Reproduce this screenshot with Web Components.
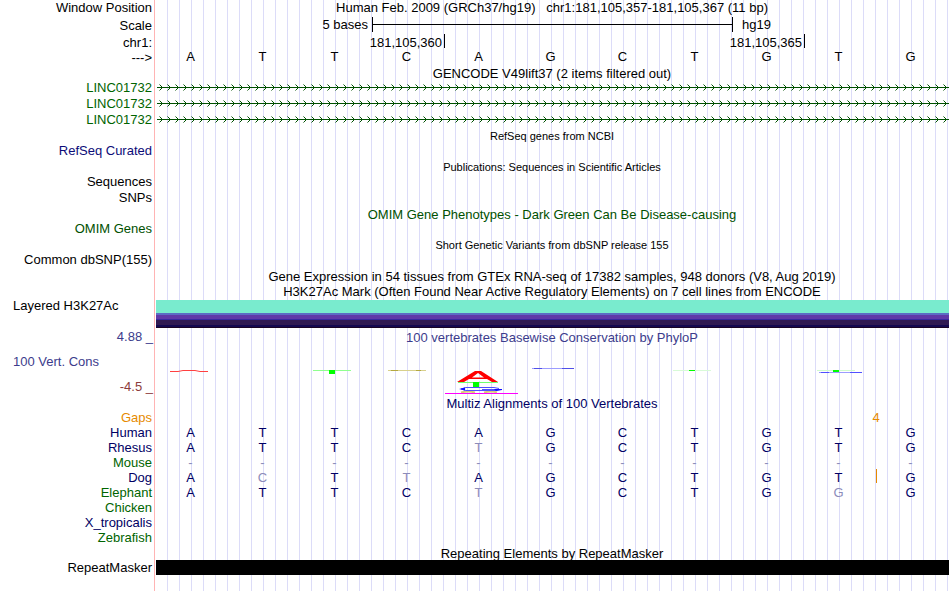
<!DOCTYPE html>
<html lang="en">
<head>
<meta charset="utf-8">
<title>Human chr1:181,105,357-181,105,367</title>
<style>
  body {
    margin: 0;
    background: #ffffff;
    color: #000000;
    font-family: "Liberation Sans", Arial, Helvetica, sans-serif;
    font-size: 13px;
    line-height: 15px;
  }
</style>
</head>
<body>

<genome-view>
  <track-row label="Window Position" size="position">
    <track-title>Human Feb. 2009 (GRCh37/hg19)   chr1:181,105,357-181,105,367 (11 bp)</track-title>
  </track-row>
  <track-row label="Scale" size="scale"><scale-bar from="4" to="9" text="5 bases" db="hg19"></scale-bar></track-row>
  <track-row label="chr1:" size="ruler"><ruler-marks marks="5=181,105,360 10=181,105,365"></ruler-marks></track-row>
  <track-row label="---&gt;" size="bases"><base-row bases="ATTCAGCTGTG"></base-row></track-row>

  <track-title>GENCODE V49lift37 (2 items filtered out)</track-title>
  <track-row label="LINC01732" color="#006400"><gene-lane></gene-lane></track-row>
  <track-row label="LINC01732" color="#006400"><gene-lane></gene-lane></track-row>
  <track-row label="LINC01732" color="#006400"><gene-lane></gene-lane></track-row>

  <track-title small>RefSeq genes from NCBI</track-title>
  <track-row label="RefSeq Curated" color="#0c0c78"></track-row>
  <track-title small>Publications: Sequences in Scientific Articles</track-title>
  <track-row label="Sequences"></track-row>
  <track-row label="SNPs"></track-row>
  <track-title color="#005000">OMIM Gene Phenotypes - Dark Green Can Be Disease-causing</track-title>
  <track-row label="OMIM Genes" color="#005000"></track-row>
  <track-title small>Short Genetic Variants from dbSNP release 155</track-title>
  <track-row label="Common dbSNP(155)"></track-row>
  <track-title>Gene Expression in 54 tissues from GTEx RNA-seq of 17382 samples, 948 donors (V8, Aug 2019)</track-title>
  <track-title>H3K27Ac Mark (Often Found Near Active Regulatory Elements) on 7 cell lines from ENCODE</track-title>
  <track-row label="Layered H3K27Ac" size="layered" start><signal-bar kind="layered"></signal-bar></track-row>

  <conservation-track></conservation-track>

  <track-title color="#000064">Multiz Alignments of 100 Vertebrates</track-title>
  <track-row label="Gaps" color="#e68a00" size="align"><base-row gap="10" gap-text="4"></base-row></track-row>
  <track-row label="Human" color="#000064" size="align"><base-row bases="ATTCAGCTGTG"></base-row></track-row>
  <track-row label="Rhesus" color="#000064" size="align"><base-row bases="ATTCtGCTGTG"></base-row></track-row>
  <track-row label="Mouse" color="#006400" size="align"><base-row bases="-----------"></base-row></track-row>
  <track-row label="Dog" color="#000064" size="align"><base-row bases="AcTtAGCTGTG" gap="10"></base-row></track-row>
  <track-row label="Elephant" color="#006400" size="align"><base-row bases="ATTCtGCTGgG"></base-row></track-row>
  <track-row label="Chicken" color="#006400" size="align"></track-row>
  <track-row label="X_tropicalis" color="#000064" size="align"></track-row>
  <track-row label="Zebrafish" color="#006400" size="align"></track-row>

  <track-title tight>Repeating Elements by RepeatMasker</track-title>
  <track-row label="RepeatMasker" size="repeat"><signal-bar kind="solid"></signal-bar></track-row>
</genome-view>

<script>
const BASES = 11;

function render(element, markup) {
  element.attachShadow({mode: 'open'}).innerHTML = markup;
}

// Page frame: guide lines behind, the rows of tracks in front
class GenomeView extends HTMLElement {
  connectedCallback() {
    render(this, `
      <style>
        :host {
          display: grid;
          min-height: 100vh;
          --label-width: 156px;
        }
        .guides, .tracks {
          grid-area: 1 / 1;
          min-width: 0;
        }
        .guides {
          margin-left: 154px;
          padding: 0 2px 0 1px;
          border-left: 1px solid #ffb4b4;
          background: linear-gradient(to left, #dcdcf8 1px, transparent 1px) content-box;
          background-origin: content-box;
          background-size: calc(100% / 66) 100%;
        }
        .tracks {
          padding-right: 2px;
        }
      </style>
      <div class="guides"></div>
      <main class="tracks"><slot></slot></main>
    `);
  }
}

class TrackTitle extends HTMLElement {
  connectedCallback() {
    render(this, `
      <style>
        :host {
          display: block;
          margin-left: var(--label-width, 0);
          text-align: center;
          line-height: 15px;
        }
        :host([small]) { font-size: 11px; }
        :host([tight]) { height: 14px; }
        slot { white-space: pre; }
      </style>
      <slot></slot>
    `);
    if (this.getAttribute('color')) {
      this.style.color = this.getAttribute('color');
    }
  }
}

class TrackRow extends HTMLElement {
  connectedCallback() {
    render(this, `
      <style>
        :host {
          display: flex;
          height: 16px;
        }
        :host([size="position"]) { height: 17px; --label-line: 16px; }
        :host([size="scale"]) { height: 17px; --label-line: 17px; }
        :host([size="ruler"]) { height: 15px; --label-line: 17px; }
        :host([size="bases"]) { height: 17px; --label-line: 17px; }
        :host([size="align"]) { height: 15px; --letter-line: 14px; }
        :host([size="repeat"]) { --label-line: 16px; }
        :host([size="layered"]) { height: 29px; }
        .label {
          box-sizing: border-box;
          flex: none;
          width: var(--label-width);
          padding-right: 4px;
          text-align: right;
          line-height: var(--label-line, 14px);
        }
        :host([start]) .label {
          padding-left: 13px;
          text-align: left;
        }
        .track {
          flex: 1;
          min-width: 0;
          --label-width: 0;
        }
        :host([size="align"]) .track { color: #000064; }
        ::slotted(track-title) { --label-width: 0; }
      </style>
      <div class="label">${this.getAttribute('label')}</div>
      <div class="track"><slot></slot></div>
    `);
    if (this.getAttribute('color')) {
      this.shadowRoot.querySelector('.label').style.color = this.getAttribute('color');
    }
  }
}

class ScaleBar extends HTMLElement {
  connectedCallback() {
    const from = this.getAttribute('from'), to = this.getAttribute('to');
    render(this, `
      <style>
        :host {
          display: grid;
          grid-template-columns: repeat(${BASES}, 1fr);
          line-height: 15px;
        }
        .before {
          grid-column: 1 / ${from};
          padding-right: 4px;
          text-align: right;
        }
        .bar {
          grid-column: ${from} / ${to};
          display: flex;
          align-items: center;
          height: 15px;
          margin-right: -1px;
          border: solid #000000;
          border-width: 0 1px;
        }
        .bar i {
          flex: 1;
          height: 1px;
          background: #000000;
        }
        .after {
          grid-column: ${to} / -1;
          padding-left: 10px;
        }
      </style>
      <span class="before">${this.getAttribute('text')}</span>
      <span class="bar"><i></i></span>
      <span class="after">${this.getAttribute('db')}</span>
    `);
  }
}

class RulerMarks extends HTMLElement {
  connectedCallback() {
    const marks = this.getAttribute('marks').split(' ').map(mark => mark.split('='));
    render(this, `
      <style>
        :host {
          display: grid;
          grid-template-columns: repeat(${BASES}, 1fr);
          line-height: 17px;
        }
        span {
          grid-row: 1;
          display: flex;
          justify-content: flex-end;
          margin-right: -1px;
        }
        i {
          width: 1px;
          height: 14px;
          margin-left: 2px;
          background: #000000;
        }
      </style>
      ${marks.map(([line, text]) => `<span style="grid-column: ${line - 2} / ${line}">${text}<i></i></span>`).join('')}
    `);
  }
}

// One letter for each base; lower case marks a base that differs from human
class BaseRow extends HTMLElement {
  connectedCallback() {
    const bases = this.getAttribute('bases') || '', gap = Number(this.getAttribute('gap'));
    let cells = '';
    for (const [i, base] of [...bases].entries()) {
      const faint = base != base.toUpperCase() || base == '-';
      cells += `<span class="${faint ? 'faint' : ''}" style="grid-column: ${i + 1}">${base.toUpperCase()}</span>`;
    }
    if (gap) {
      const text = this.getAttribute('gap-text');
      cells += `<b class="${text ? '' : 'tick'}" style="grid-column: ${gap} / span 2">${text || ''}</b>`;
    }
    render(this, `
      <style>
        :host {
          display: grid;
          grid-template-columns: repeat(${BASES}, 1fr);
          line-height: var(--letter-line, 15px);
        }
        span, b {
          grid-row: 1;
        }
        span {
          padding-right: 3px;
          text-align: center;
        }
        .faint { color: #8c8cba; }
        b {
          justify-self: center;
          color: #e68a00;
          font-weight: normal;
        }
        .tick {
          width: 1px;
          height: 14px;
          margin-top: -2px;
          background: #e68a00;
        }
      </style>
      ${cells}
    `);
  }
}

let laneCount = 0;

class GeneLane extends HTMLElement {
  connectedCallback() {
    const id = 'strand' + laneCount++;
    render(this, `
      <style>
        :host {
          display: block;
          margin-right: -1px;
        }
        svg {
          display: block;
          width: 100%;
          height: 14px;
        }
      </style>
      <svg aria-hidden="true">
        <defs>
          <pattern id="${id}" width="8" height="14" patternUnits="userSpaceOnUse">
            <path d="M3.5 3.5L6.5 6.5L3.5 9.5" fill="none" stroke="#005000"/>
          </pattern>
        </defs>
        <rect width="100%" height="14" fill="url(#${id})"/>
        <rect x="1" y="6" width="100%" height="1" fill="#005000"/>
      </svg>
    `);
  }
}

class SignalBar extends HTMLElement {
  connectedCallback() {
    render(this, `
      <style>
        :host {
          display: block;
          height: 15px;
          margin-right: -1px;
          background: #000000;
        }
        :host([kind="layered"]) {
          height: 28px;
          margin-top: 1px;
          background: linear-gradient(
            #79ebce 13px, #5c6cc4 13px 15px, #6039a8 15px 19px, #3828a0 19px 20px,
            #301a52 20px 25px, #140850 25px 27px, #1a0424 27px);
        }
      </style>
    `);
  }
}

// Sequence logo under the phyloP title, one drawing for each base
const LOGOS = {
  1: `<path d="M14 26.5H22L27 25.5H39L44 26.5H52" fill="none" stroke="#ff4040"/>`,
  3: `<path d="M13 25.5H51" stroke="#90ff90"/><path d="M29 25h6v4h-6z" fill="#00ff00"/>`,
  4: `<path d="M16 25.5H54" stroke="#d8d08c"/><path d="M19 25.5h7M44 25.5h5" stroke="#b4a840"/>`,
  5: `<path d="M13 37L31 26H37L54 37H48L43 34H25L20 37ZM28 32.5H40L34 28Z" fill="#ff0000" fill-rule="evenodd"/>
      <path d="M26 34H42L40 36H28Z" fill="#ffffff"/>
      <path d="M14 37.5H54" stroke="#70ff70"/>
      <path d="M29 37h6v5h-6z" fill="#00ff00"/>
      <path d="M17 47.5Q24 45.5 31 47.5M40 47.5Q48 45.5 53 47.5" fill="none" stroke="#d8c878" stroke-width="2"/>
      <path d="M55 43.5L50 42.5H22L17 44L22 45.5H52L56 44.5H38" fill="none" stroke="#5050ff"/>
      <path d="M15 44L21 42.5V45.5ZM50 44H58V45L52 46Z" fill="#1010ff"/>
      <path d="M1 48.5H74" stroke="#ff00ff"/>`,
  6: `<path d="M16 23.5H58" stroke="#9c9cff"/><path d="M18 23.5h8M46 23.5h12" stroke="#5050e8"/>`,
  8: `<path d="M13 25.5H51" stroke="#d8fad8"/><path d="M29 25h6v1h-6z" fill="#00ff00"/>`,
  10: `<path d="M13 25.5H51" stroke="#d0fad0"/><path d="M29 25h6v2h-6z" fill="#00ff00"/>
       <path d="M15 27.5H58" stroke="#9c9cff"/><path d="M17 27.5h8M46 27.5h12" stroke="#5050ff"/>`
};

class ConservationTrack extends HTMLElement {
  connectedCallback() {
    let logos = '';
    for (let i = 1; i <= BASES; i++) {
      logos += `<svg viewBox="0 0 72 50" preserveAspectRatio="none" aria-hidden="true">${LOGOS[i] || ''}</svg>`;
    }
    render(this, `
      <style>
        :host {
          display: flex;
          height: 66px;
          padding-top: 2px;
          color: #3c3c8c;
        }
        .labels {
          box-sizing: border-box;
          flex: none;
          display: flex;
          flex-direction: column;
          justify-content: space-between;
          width: var(--label-width);
          padding: 0 3px 2px 13px;
          line-height: 14px;
        }
        .limit { text-align: right; }
        .low { color: #8c3c3c; }
        .track {
          flex: 1;
          min-width: 0;
          --label-width: 0;
        }
        .logos {
          display: grid;
          grid-template-columns: repeat(${BASES}, 1fr);
        }
        svg {
          display: block;
          width: 100%;
          height: 50px;
          overflow: visible;
        }
      </style>
      <div class="labels">
        <span class="limit">4.88 _</span>
        <span>100 Vert. Cons</span>
        <span class="limit low">-4.5 _</span>
      </div>
      <div class="track">
        <track-title>100 vertebrates Basewise Conservation by PhyloP</track-title>
        <div class="logos">${logos}</div>
      </div>
    `);
  }
}

customElements.define('genome-view', GenomeView);
customElements.define('track-title', TrackTitle);
customElements.define('track-row', TrackRow);
customElements.define('scale-bar', ScaleBar);
customElements.define('ruler-marks', RulerMarks);
customElements.define('base-row', BaseRow);
customElements.define('gene-lane', GeneLane);
customElements.define('signal-bar', SignalBar);
customElements.define('conservation-track', ConservationTrack);
</script>
</body>
</html>
